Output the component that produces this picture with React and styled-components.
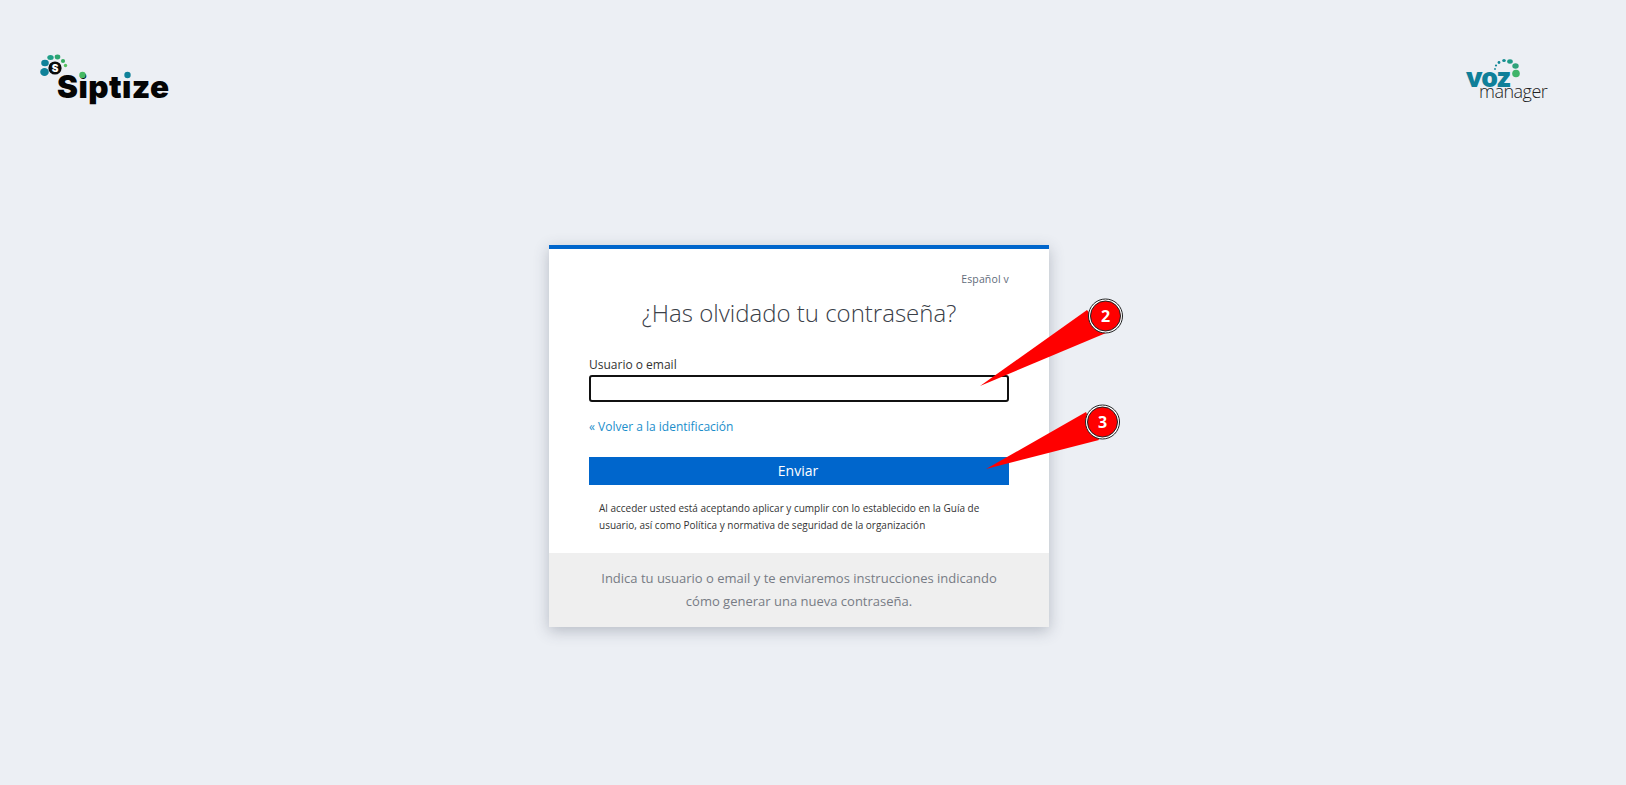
import React from 'react';
import styled, { createGlobalStyle } from 'styled-components';

const Global = createGlobalStyle`
  html, body {
    margin: 0;
    padding: 0;
    background: #eceff4;
    font-family: "Open Sans", "Liberation Sans", sans-serif;
  }
  * { box-sizing: border-box; }
`;

const Page = styled.div`
  position: relative;
  height: 785px;
  overflow: hidden;
  background: #eceff4;
`;

const Header = styled.header`
  display: flex;
  justify-content: space-between;
  height: 245px;
  padding: 50px 74px 0 36px;
`;

const Card = styled.main`
  width: 500px;
  margin-left: 549px;
  background: #fff;
  border-top: 4px solid #0066cc;
  box-shadow: 0 4px 14px rgba(60, 70, 90, 0.3);
`;

const Body = styled.div`
  height: 304px;
  padding: 0 40px;
`;

const LangRow = styled.div`
  display: flex;
  justify-content: flex-end;
  padding-top: 22px;
  font-size: 10.5px;
  letter-spacing: 0.15px;
  line-height: 16px;
  color: #5f6b7a;
`;

const Title = styled.h1`
  margin: 9px 0 0;
  font-size: 24px;
  line-height: 34px;
  font-weight: 300;
  text-align: center;
  color: #3a4048;
`;

const Label = styled.label`
  display: block;
  margin-top: 27px;
  font-size: 12px;
  line-height: 16px;
  color: #333;
`;

const Input = styled.input`
  display: block;
  width: 100%;
  height: 27px;
  margin-top: 2px;
  background: #fff;
  border: 2px solid #111;
  border-radius: 3px;
  outline: none;
`;

const BackLink = styled.a`
  display: block;
  margin-top: 17px;
  font-size: 12px;
  line-height: 16px;
  color: #1b8ecb;
  text-decoration: none;
`;

const Submit = styled.button`
  display: block;
  width: 100%;
  height: 28px;
  margin-top: 22px;
  padding: 0 2px 2px 0;
  background: #0066cc;
  border: 0;
  color: #fff;
  font-family: inherit;
  font-size: 14px;
`;

const Terms = styled.p`
  margin: 15px 0 0;
  padding: 0 10px;
  font-size: 10px;
  line-height: 17px;
  color: #333;
`;

const Footer = styled.div`
  height: 74px;
  padding: 14px 40px 0;
  background: #efefef;
  font-size: 13px;
  line-height: 22.5px;
  text-align: center;
  color: #777c85;
`;

const Overlay = styled.svg`
  position: absolute;
  left: 0;
  top: 0;
  pointer-events: none;
`;

const SiptizeLogo = () => (
  <svg width="140" height="60" viewBox="36 50 140 60">
    <ellipse cx="44.5" cy="72" rx="4.3" ry="4" fill="#0f8199" />
    <ellipse cx="45" cy="63" rx="3.8" ry="3.2" fill="#0f8199" />
    <ellipse cx="50.5" cy="57.5" rx="3.2" ry="2.5" fill="#1f9e87" />
    <ellipse cx="57.5" cy="57" rx="2.8" ry="2.4" fill="#2ca66f" />
    <circle cx="63" cy="61" r="2.1" fill="#35ac5f" />
    <circle cx="65.5" cy="65.5" r="1.7" fill="#56c060" />
    <circle cx="55" cy="68" r="6.6" fill="#0a0a0a" />
    <text x="55" y="71.5" textAnchor="middle" fontFamily="Inter, sans-serif" fontWeight="900" fontSize="10" fill="#fff">S</text>
    <text x="57" y="98" fontFamily="Inter, sans-serif" fontWeight="900" fontSize="31.5" textLength="112" lengthAdjust="spacing" fill="#050505">Siptıze</text>
    <circle cx="82.5" cy="75" r="3.2" fill="#45b863" />
    <circle cx="127.5" cy="75" r="3.2" fill="#0f8199" />
  </svg>
);

const VozLogo = () => (
  <svg width="90" height="60" viewBox="1462 50 90 60">
    <circle cx="1516" cy="73.5" r="3.8" fill="#3fb56a" />
    <ellipse cx="1515.5" cy="66" rx="3.2" ry="2.8" fill="#2ea37a" />
    <ellipse cx="1510" cy="61.5" rx="2.8" ry="2.2" fill="#1d9a86" />
    <ellipse cx="1504" cy="60.5" rx="1.8" ry="1.6" fill="#158d92" />
    <circle cx="1499" cy="62.5" r="1.4" fill="#108596" />
    <circle cx="1496" cy="65.5" r="1.1" fill="#108596" />
    <circle cx="1495" cy="69" r="0.9" fill="#108596" />
    <text x="1466" y="87" fontFamily="'Open Sans', sans-serif" fontWeight="800" fontSize="27" letterSpacing="-1.4" fill="#0f7f99">voz</text>
    <text x="1479" y="98" fontFamily="'Open Sans', sans-serif" fontWeight="300" fontSize="18" letterSpacing="-0.5" fill="#222">manager</text>
  </svg>
);

const Balloon = ({ cx, cy, tip, base1, base2, n }) => (
  <g>
    <polygon points={`${tip} ${base1} ${base2}`} fill="#ff0000" />
    <circle cx={cx} cy={cy} r="17" fill="#fff" stroke="#222" strokeWidth="1" />
    <circle cx={cx} cy={cy} r="15" fill="#ff0000" stroke="#222" strokeWidth="1" />
    <text x={cx} y={cy + 6} textAnchor="middle" fontFamily="'Open Sans', sans-serif" fontWeight="700" fontSize="16" fill="#fff">{n}</text>
  </g>
);

export default function App() {
  return (
    <Page>
      <Global />
      <Header>
        <SiptizeLogo />
        <VozLogo />
      </Header>
      <Card>
        <Body>
          <LangRow>Español v</LangRow>
          <Title>¿Has olvidado tu contraseña?</Title>
          <Label>Usuario o email</Label>
          <Input type="text" />
          <BackLink href="#">« Volver a la identificación</BackLink>
          <Submit>Enviar</Submit>
          <Terms>
            Al acceder usted está aceptando aplicar y cumplir con lo establecido en la Guía de usuario, así como Política y normativa de seguridad de la organización
          </Terms>
        </Body>
        <Footer>
          Indica tu usuario o email y te enviaremos instrucciones indicando cómo generar una nueva contraseña.
        </Footer>
      </Card>
      <Overlay width="1626" height="785" viewBox="0 0 1626 785">
        <Balloon cx={1105.5} cy={316} tip="980,386" base1="1087,310" base2="1106,333" n="2" />
        <Balloon cx={1102.5} cy={422} tip="986,469" base1="1086,412" base2="1099,440" n="3" />
      </Overlay>
    </Page>
  );
}
